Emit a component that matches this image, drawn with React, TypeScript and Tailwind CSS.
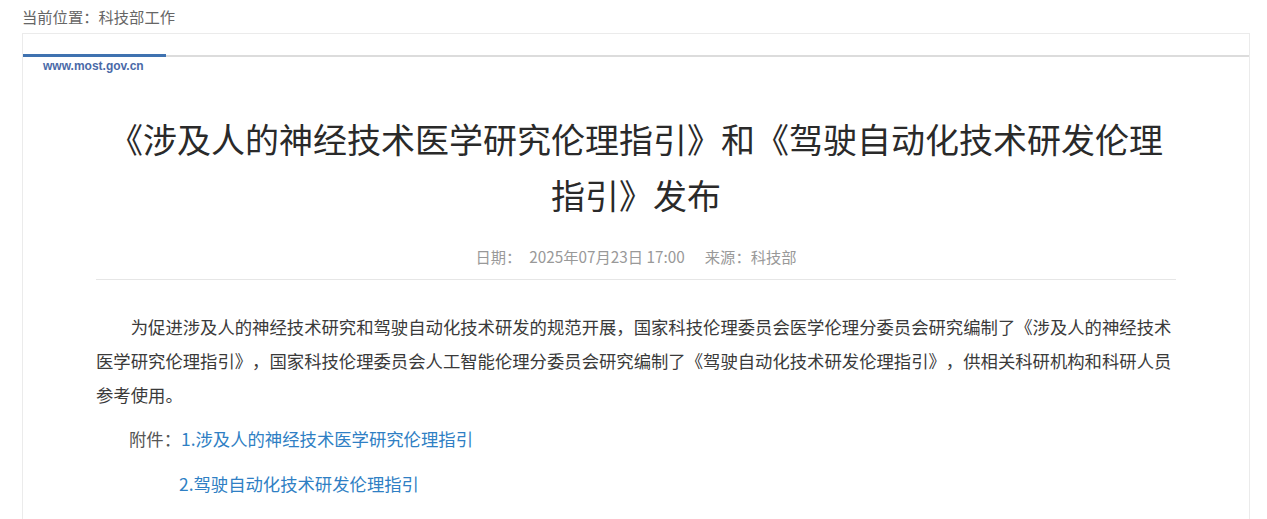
import React from "react";

const cjk = { fontFamily: '"Noto Sans CJK SC", "Noto Sans", sans-serif' };

const App: React.FC = () => {
  return (
    <div className="min-h-screen bg-white [text-spacing-trim:space-all]" style={cjk}>
      <div className="pl-[22px] pr-[17px]">
        {/* breadcrumb */}
        <div className="h-[33px] leading-[33px] text-[15.3px] text-[#666]">
          当前位置：科技部工作
        </div>

        <div className="border border-b-0 border-[#ebebeb] pt-[20px] min-h-[486px]">
          {/* top bar */}
          <div className="relative h-[3px]">
            <div className="absolute left-0 right-0 bottom-0 h-[2px] bg-[#dcdcdc]" />
            <div className="absolute left-0 top-0 h-[3px] w-[143px] bg-[#3f72b0]" />
          </div>
          <div
            className="mt-[2px] pl-[20px] text-[12px] leading-[14px] font-bold text-[#4a6aa8]"
            style={{ fontFamily: '"Liberation Sans", Arial, sans-serif' }}
          >
            www.most.gov.cn
          </div>

          <div className="px-[73px]">
            <h1 className="mt-[38px] text-center text-[34px] leading-[56px] font-normal text-[#2a2a2a]">
              《涉及人的神经技术医学研究伦理指引》和《驾驶自动化技术研发伦理指引》发布
            </h1>

            <div className="mt-[21px] border-b border-[#e6e6e6] pb-[11px] text-center text-[15.3px] leading-[24px] text-[#999]">
              <span>日期：</span>
              <span className="ml-[8px]">2025年07月23日 17:00</span>
              <span className="ml-[20px]">来源：科技部</span>
            </div>

            <p className="mt-[30px] indent-[2em] text-[17.35px] leading-[34px] text-[#3a3a3a]">
              为促进涉及人的神经技术研究和驾驶自动化技术研发的规范开展，国家科技伦理委员会医学伦理分委员会研究编制了《涉及人的神经技术医学研究伦理指引》，国家科技伦理委员会人工智能伦理分委员会研究编制了《驾驶自动化技术研发伦理指引》，供相关科研机构和科研人员参考使用。
            </p>

            <div className="mt-[4px] pl-[33px] text-[17.35px] leading-[45px] whitespace-nowrap">
              <div className="flex">
                <span className="text-[#555]">附件：</span>
                <a className="text-[#2f7fc4]" href="#">
                  1.涉及人的神经技术医学研究伦理指引
                </a>
              </div>
              <div className="pl-[50px]">
                <a className="text-[#2f7fc4]" href="#">
                  2.驾驶自动化技术研发伦理指引
                </a>
              </div>
            </div>
          </div>
        </div>
      </div>
    </div>
  );
};

export default App;
